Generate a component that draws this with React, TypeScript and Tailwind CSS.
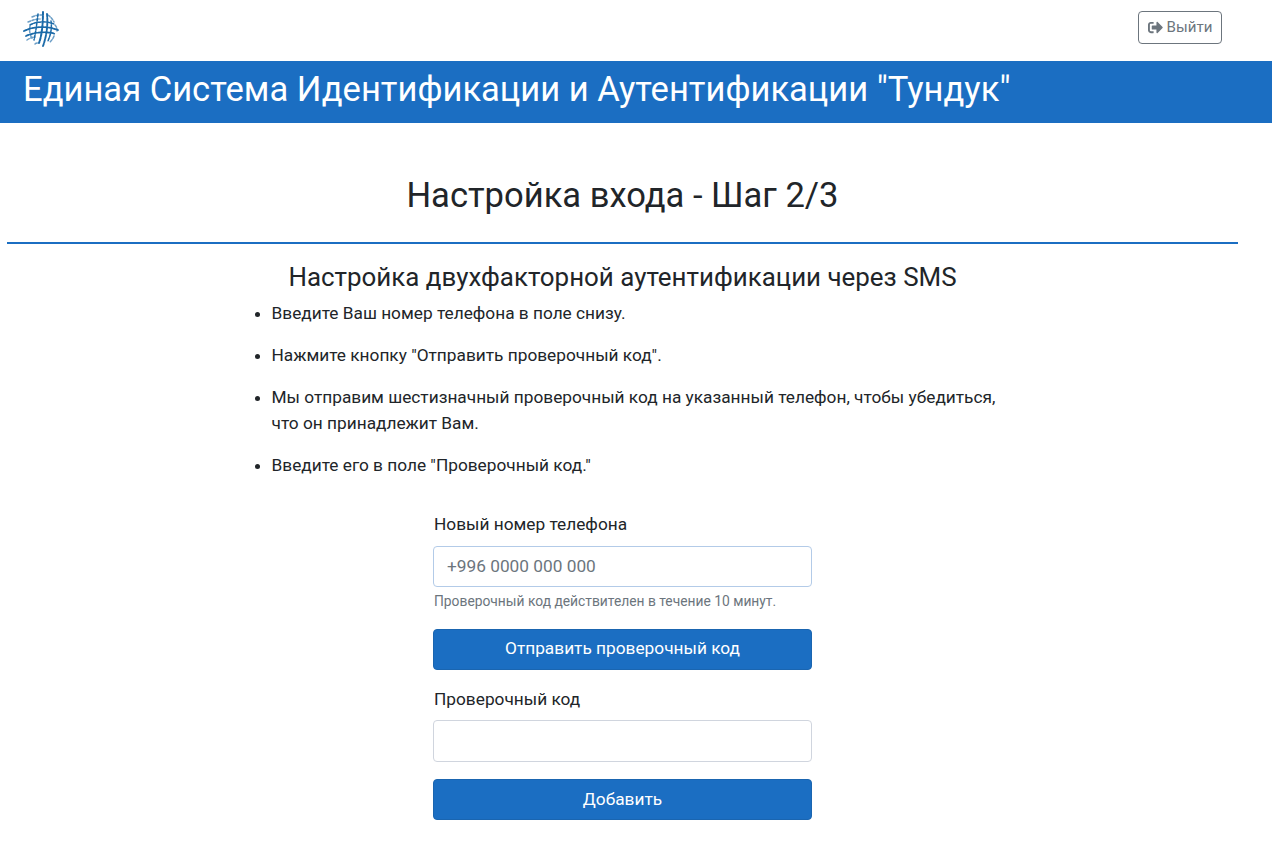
import { FaSignOutAlt } from "react-icons/fa";

const steps = [
  "Введите Ваш номер телефона в поле снизу.",
  'Нажмите кнопку "Отправить проверочный код".',
  "Мы отправим шестизначный проверочный код на указанный телефон, чтобы убедиться, что он принадлежит Вам.",
  'Введите его в поле "Проверочный код."',
];

function Logo() {
  return (
    <svg width="36" height="36" viewBox="0 0 36 36" fill="none" stroke="#1b6aa8" strokeWidth="1.5" strokeLinecap="round">
      <g opacity="0.65" strokeDasharray="2.5 1.6">
        <path d="M9 6C13 4 16 4 19 4" />
        <path d="M5 11C10 9 13 8 17 8" />
        <path d="M4 29C7 27 10 26 12 26" />
        <path d="M12 33C13 32 14 32 15 32" />
        <path d="M25 4C28 6 30 9 31 11" />
        <path d="M32 14C34 16 34 18 34 20" />
        <path d="M31 25C30 28 28 30 27 31" />
        <path d="M7 15C6 20 7 24 9 27" />
      </g>
      <g strokeDasharray="3 1.3">
        <path d="M7 14C14 10 24 10 31 13" />
        <path d="M1 20C11 15 25 15 35 19" strokeWidth="1.8" />
        <path d="M3 25C11 21 25 20 32 23" strokeWidth="1.7" />
        <path d="M15 3C14 11 13 20 11 29" />
        <path d="M20 1C20 12 19 24 16 32" strokeWidth="2" />
        <path d="M24 3C25 12 24 24 20 35" strokeWidth="1.9" />
        <path d="M28 10C29 16 28 23 25 30" />
      </g>
    </svg>
  );
}

export default function App() {
  return (
    <div className="min-h-[863px] bg-white font-['Roboto',sans-serif] text-[17.28px] leading-[25.92px] text-[#212529]">
      <header className="flex h-[61px] items-start justify-between pl-[23px] pr-[50px] pt-[11px]">
        <Logo />
        <button className="flex h-[33px] w-[84px] items-center justify-center gap-1 rounded border border-[#6c757d] text-[15.12px] text-[#6c757d]">
          <FaSignOutAlt className="size-[15px]" />
          Выйти
        </button>
      </header>
      <div className="flex h-[62px] items-center bg-[#1b6ec2] pb-[4px] pl-[23px] text-[34.56px] text-white">
        Единая Система Идентификации и Аутентификации "Тундук"
      </div>

      <main className="w-[1245px]">
        <h1 className="mt-[51px] text-center text-[34.56px] leading-[42px]">Настройка входа - Шаг 2/3</h1>
        <hr className="mx-[7px] mt-[26px] border-t-2 border-[#1b6ec2]" />
        <h2 className="mt-[18px] text-center text-[25.92px] leading-[31px]">Настройка двухфакторной аутентификации через SMS</h2>

        <ul className="mt-[8.2px] ml-[271.5px] w-[736px] list-disc">
          {steps.map((s) => (
            <li key={s} className="mb-[16.2px]">{s}</li>
          ))}
        </ul>

        <form className="mx-auto mt-[32.4px] flex w-[379px] flex-col">
          <label className="pl-px">Новый номер телефона</label>
          <input
            placeholder="+996 0000 000 000"
            className="mt-[8px] h-[41px] rounded border border-[#b3cbe8] px-[13px] pb-px placeholder:text-[#6c757d]"
          />
          <small className="mt-[4px] pl-px text-[13.82px] leading-[21px] text-[#6c757d]">
            Проверочный код действителен в течение 10 минут.
          </small>
          <button type="button" className="mt-[17px] h-[41px] rounded border border-[#1a65b0] bg-[#1b6ec2] text-white">
            Отправить проверочный код
          </button>
          <label className="mt-[17px] pl-px">Проверочный код</label>
          <input className="mt-[7.4px] h-[42px] rounded border border-[#d0d5de] px-[13px]" />
          <button type="button" className="mt-[17px] h-[41px] rounded border border-[#1a65b0] bg-[#1b6ec2] text-white">
            Добавить
          </button>
        </form>
      </main>
    </div>
  );
}
